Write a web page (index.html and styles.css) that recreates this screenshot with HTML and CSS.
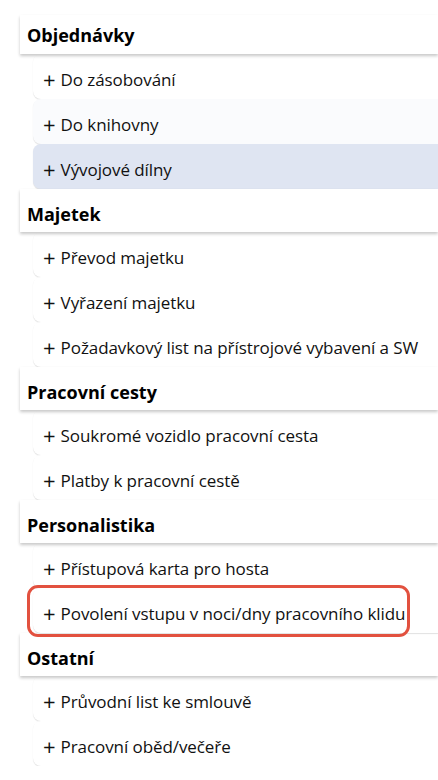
FILE: index.html
```html
<!DOCTYPE html>
<html lang="cs">
<head>
<meta charset="utf-8">
<link rel="stylesheet" href="styles.css">
</head>
<body>
<div class="menu">
  <section class="group first">
    <div class="group-title">Objednávky</div>
    <div class="item"><span class="plus">+</span>Do zásobování</div>
    <div class="item hover"><span class="plus">+</span>Do knihovny</div>
    <div class="item active"><span class="plus">+</span>Vývojové dílny</div>
  </section>
  <section class="group">
    <div class="group-title">Majetek</div>
    <div class="item"><span class="plus">+</span>Převod majetku</div>
    <div class="item"><span class="plus">+</span>Vyřazení majetku</div>
    <div class="item"><span class="plus">+</span>Požadavkový list na přístrojové vybavení a SW</div>
  </section>
  <section class="group">
    <div class="group-title">Pracovní cesty</div>
    <div class="item"><span class="plus">+</span>Soukromé vozidlo pracovní cesta</div>
    <div class="item"><span class="plus">+</span>Platby k pracovní cestě</div>
  </section>
  <section class="group">
    <div class="group-title">Personalistika</div>
    <div class="item"><span class="plus">+</span>Přístupová karta pro hosta</div>
    <div class="item marked"><span class="plus">+</span>Povolení vstupu v noci/dny pracovního klidu<span class="mark"></span></div>
  </section>
  <section class="group">
    <div class="group-title">Ostatní</div>
    <div class="item"><span class="plus">+</span>Průvodní list ke smlouvě</div>
    <div class="item"><span class="plus">+</span>Pracovní oběd/večeře</div>
  </section>
</div>
</body>
</html>
```
FILE: styles.css
```css
html, body {
  margin: 0;
  padding: 0;
  background: #ffffff;
}
body {
  font-family: "Open Sans", "Noto Sans", sans-serif;
  color: #111;
}
.menu {
  padding: 15px 0 0 20px;
  display: flex;
  flex-direction: column;
}
.group {
  display: flex;
  flex-direction: column;
}
.group-title {
  height: 39px;
  box-sizing: border-box;
  padding: 8px 0 0 7px;
  font-size: 18px;
  line-height: 24px;
  font-weight: 700;
  color: #000;
  background: #fff;
  box-shadow: 0 2px 3px rgba(0,0,0,0.22);
  position: relative;
  z-index: 2;
}
.group + .group .group-title {
  height: 43px;
  padding-top: 13px;
}
.item {
  margin-left: 13px;
  height: 45px;
  box-sizing: border-box;
  padding: 14px 0 0 10px;
  font-size: 17px;
  line-height: 23px;
  letter-spacing: -0.08px;
  background: #fff;
  border-radius: 8px 0 0 8px;
  box-shadow: 0 1px 1px rgba(0,0,0,0.12);
  position: relative;
}
.plus {
  display: inline-block;
  font-size: 22px;
  line-height: 23px;
  vertical-align: top;
  margin-right: 5px;
  letter-spacing: 0;
}
.item.hover {
  background: #fafbfd;
}
.item.active {
  background: #dfe5f2;
}
.item.marked {
  z-index: 3;
}
.mark {
  position: absolute;
  left: -6px;
  top: -3px;
  width: 383px;
  bottom: -4px;
  box-sizing: border-box;
  border: 3px solid #e2513f;
  border-radius: 11px;
}
```
